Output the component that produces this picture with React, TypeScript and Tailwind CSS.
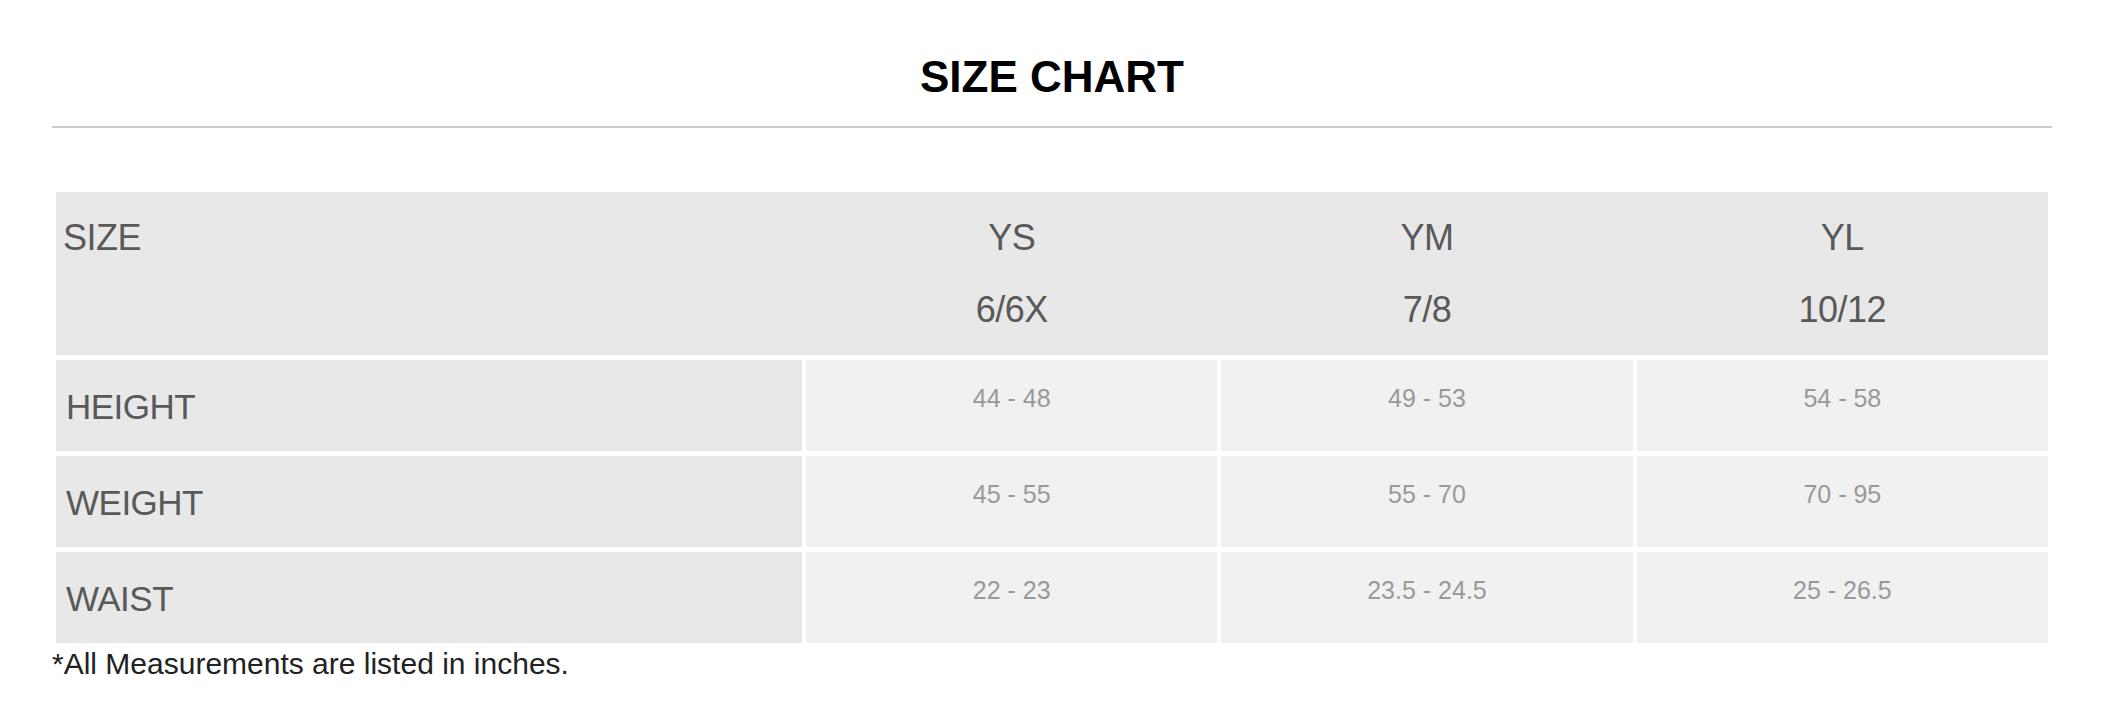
const sizes = [
  { code: "YS", age: "6/6X" },
  { code: "YM", age: "7/8" },
  { code: "YL", age: "10/12" },
];

const rows = [
  { label: "HEIGHT", values: ["44 - 48", "49 - 53", "54 - 58"] },
  { label: "WEIGHT", values: ["45 - 55", "55 - 70", "70 - 95"] },
  { label: "WAIST", values: ["22 - 23", "23.5 - 24.5", "25 - 26.5"] },
];

export default function App() {
  return (
    <div className="min-h-[720px] bg-white font-['Liberation_Sans',Arial,sans-serif]">
      <div className="ml-[52px] w-[2000px] pt-[51px]">
        <h1 className="text-center text-[44px] font-bold leading-[52px] text-black">
          SIZE CHART
        </h1>
        <div className="mt-[23px] h-[2px] bg-[#cccccc]" />

        <div className="mx-[4px] mt-[64px] flex flex-col gap-[5px]">
          {/* header */}
          <div className="grid h-[163px] grid-cols-[746px_1fr_1fr_1fr] gap-x-[4px] bg-[#e8e8e8] pt-[10px] text-[36px] leading-[72px] tracking-[-0.5px] text-[#595959]">
            <div className="pl-[7px]">SIZE</div>
            {sizes.map((s) => (
              <div key={s.code} className="text-center">
                <div>{s.code}</div>
                <div>{s.age}</div>
              </div>
            ))}
          </div>

          {rows.map((row) => (
            <div
              key={row.label}
              className="grid h-[91px] grid-cols-[746px_1fr_1fr_1fr] gap-x-[4px]"
            >
              <div className="bg-[#e8e8e8] pl-[10px] pt-[27px] text-[35px] leading-[40px] tracking-[-0.5px] text-[#595959]">
                {row.label}
              </div>
              {row.values.map((v, i) => (
                <div
                  key={i}
                  className="bg-[#f1f1f1] pt-[23px] text-center text-[25px] leading-[30px] text-[#999999]"
                >
                  {v}
                </div>
              ))}
            </div>
          ))}
        </div>

        <p className="mt-[4px] text-[30px] leading-[34px] text-[#222222]">
          *All Measurements are listed in inches.
        </p>
      </div>
    </div>
  );
}
